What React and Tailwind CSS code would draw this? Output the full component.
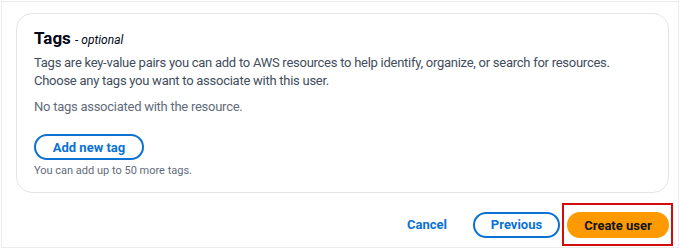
import React from "react";

const App = () => {
  return (
    <div
      className="w-[680px] h-[249px] bg-white p-px"
      style={{ fontFamily: 'Roboto, "Noto Sans", Arial, sans-serif' }}
    >
      <div className="h-full border border-[#e9ebed] flex flex-col">
        {/* tags panel */}
        <div className="mt-[11px] ml-[14px] mr-[9px] h-[180px] rounded-2xl border border-[#e3e5e8] px-[17px] pt-[14px]">
          <h2 className="text-[17px] leading-[20px] font-bold text-[#000716]">
            Tags{" "}
            <span className="text-[12px] font-normal italic text-[#000716]">- optional</span>
          </h2>
          <p className="mt-[4px] text-[13px] leading-[18px] tracking-[-0.26px] text-[#414d5c] whitespace-nowrap">
            Tags are key-value pairs you can add to AWS resources to help identify, organize, or search for resources.
            <br />
            Choose any tags you want to associate with this user.
          </p>
          <p className="mt-[8px] text-[13px] leading-[18px] tracking-[-0.26px] text-[#5f6b7a]">
            No tags associated with the resource.
          </p>
          <button className="mt-[18px] h-[26px] w-[110px] rounded-full border-2 border-[#0972d3] text-[13px] font-bold text-[#0972d3] leading-none">
            Add new tag
          </button>
          <p className="mt-[4px] text-[11px] leading-[14px] text-[#5f6b7a]">
            You can add up to 50 more tags.
          </p>
        </div>

        {/* footer actions */}
        <div className="flex items-center justify-end mt-[10px] mr-[5px]">
          <button className="mr-[26px] text-[13px] font-bold text-[#0972d3]">Cancel</button>
          <button className="h-[26px] w-[87px] rounded-full border-2 border-[#0972d3] text-[13px] font-bold text-[#0972d3] leading-none">
            Previous
          </button>
          <div className="ml-[2px] border-2 border-[#d40b0b] pt-[7px] pb-[6px] pl-[3px] pr-[2px]">
            <button className="block h-[26px] w-[102px] rounded-full bg-[#ff9900] text-[13px] font-bold text-[#0f141a] leading-none">
              Create user
            </button>
          </div>
        </div>
      </div>
    </div>
  );
};

export default App;
